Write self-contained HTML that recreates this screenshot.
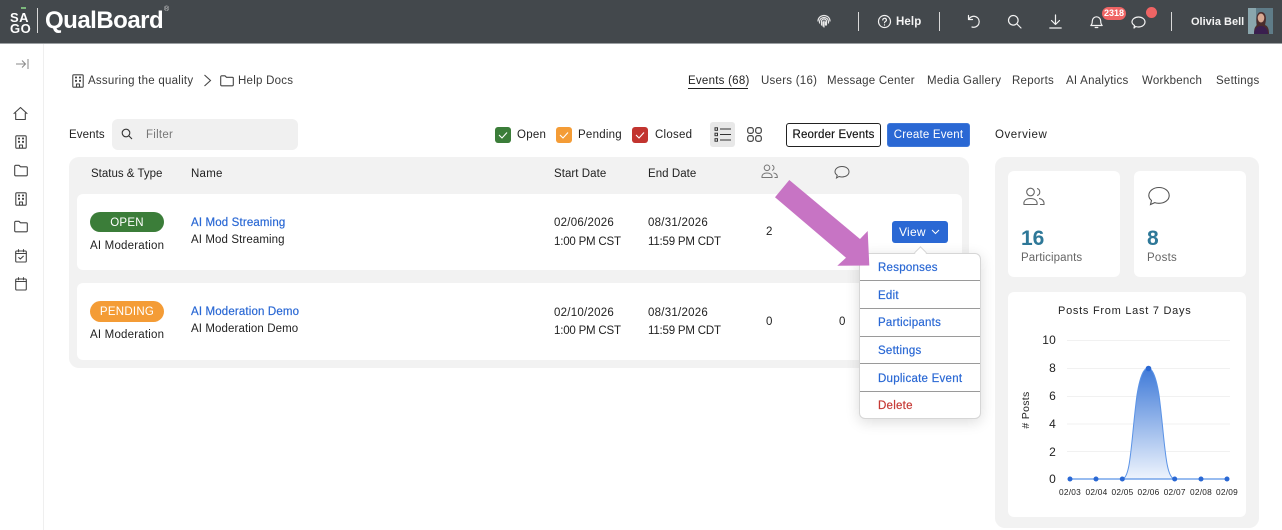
<!DOCTYPE html>
<html><head><meta charset="utf-8"><style>
html,body{margin:0;padding:0;background:#fff}
#p{position:relative;width:1282px;height:530px;overflow:hidden;background:#fff;font-family:"Liberation Sans",sans-serif;font-size:11.5px;color:#222;letter-spacing:.25px}
#p>span,.t{position:absolute;white-space:nowrap;line-height:14px}
#p>span{margin-top:1px}
.b{position:absolute}
.l{color:#2a68d4;font-weight:400;-webkit-text-stroke:.2px #2a68d4;letter-spacing:.15px}
.r2{letter-spacing:.1px}
.tm{letter-spacing:-.2px}
svg{position:absolute;overflow:visible}
.i{fill:none;stroke:#444;stroke-width:1.1;stroke-linecap:round;stroke-linejoin:round}
.w{fill:none;stroke:#f2f2f2;stroke-width:1.2;stroke-linecap:round;stroke-linejoin:round}
.n{color:#3a3a3a}
.m{color:#2a68d4;-webkit-text-stroke:.2px #2a68d4;left:878px}
.h{position:absolute;left:860px;width:120px;height:1px;background:#9a9a9a}
</style></head><body><div id="p">
<div class="b" style="left:0;top:0;width:1282px;height:43px;background:#43484c;border-bottom:1px solid #9b9fa2;box-sizing:content-box"></div>
<div class="b" style="left:43px;top:44px;width:1px;height:486px;background:#efefef"></div>

<div class="t" style="left:10px;top:12px;color:#fff;font-weight:700;font-size:13px;line-height:11px;letter-spacing:.5px">SA<br>GO</div>
<div class="b" style="left:21px;top:7px;width:5px;height:2px;background:#7cb87c"></div>
<div class="b" style="left:37px;top:8px;width:1px;height:25px;background:#d8d8d8"></div>
<div class="t" style="left:45px;top:8px;color:#fff;font-weight:700;font-size:24px;line-height:26px;letter-spacing:-.5px">QualBoard</div>
<div class="t" style="left:164px;top:6px;color:#ddd;font-size:7px;line-height:8px;letter-spacing:0">®</div>

<!-- top right -->
<svg style="left:816px;top:13px" width="16" height="16" viewBox="0 0 16 16"><g class="w" stroke-width="1"><path d="M2 8a6 5.500 0 0 1 12 0M3.500 10V8.500a4.500 4 0 0 1 9 0V10M5.500 12V8.500a2.500 2.500 0 0 1 5 0V12M8 8v6M7 13v-4M9.500 12V9" stroke="#e8e8e8"/></g></svg>
<div class="b" style="left:858px;top:12px;width:1px;height:19px;background:#d9d9d9"></div>
<svg style="left:877px;top:14px" width="15" height="15" viewBox="0 0 15 15"><circle class="w" cx="7.500" cy="7.500" r="6"/><path class="w" d="M5.800 6a1.800 1.700 0 1 1 2.600 1.500c-.6.400-.9.700-.9 1.300M7.500 10.800v.2"/></svg>
<div class="t" style="left:896px;top:15px;color:#f4f4f4;font-weight:700;font-size:11.500px;letter-spacing:.1px">Help</div>
<div class="b" style="left:939px;top:12px;width:1px;height:19px;background:#d9d9d9"></div>
<svg style="left:966px;top:14px" width="15" height="15" viewBox="0 0 15 15"><path class="w" d="M2.500 1.500v4h4M2.700 5.500A5.500 5.500 0 1 1 6 13"/></svg>
<svg style="left:1007px;top:14px" width="15" height="15" viewBox="0 0 15 15"><circle class="w" cx="6.300" cy="6.300" r="4.800"/><path class="w" d="M10 10l4 4"/></svg>
<svg style="left:1048px;top:14px" width="15" height="15" viewBox="0 0 15 15"><path class="w" d="M7.500 1v9M3.500 6.500l4 4 4-4M1.800 14h11.400"/></svg>
<svg style="left:1089px;top:14px" width="15" height="15" viewBox="0 0 15 15"><path class="w" d="M1.800 11.500c1-1 1.500-2 1.500-4.500a4.200 4.200 0 0 1 8.400 0c0 2.500.5 3.500 1.500 4.500zM6.200 13.500h2.600"/></svg>
<div class="t" style="left:1102px;top:7px;width:24px;height:13px;border-radius:7px;background:#ef6464;color:#fff;font-size:9px;font-weight:700;line-height:13px;text-align:center;letter-spacing:0">2318</div>
<svg style="left:1131px;top:15px" width="15" height="14" viewBox="0 0 15 14"><path class="w" d="M3 13l.5-2.500C2 9.500 1 8.300 1 7c0-2.800 2.900-5 6.500-5S14 4.200 14 7s-2.900 5-6.500 5c-1 0-2-.2-2.800-.5z"/></svg>
<div class="b" style="left:1146px;top:7px;width:11px;height:11px;border-radius:50%;background:#ef6464"></div>
<div class="b" style="left:1171px;top:12px;width:1px;height:19px;background:#d9d9d9"></div>
<div class="t" style="left:1191px;top:15px;color:#f4f4f4;font-weight:700;font-size:11px;letter-spacing:0">Olivia Bell</div>
<svg style="left:1248px;top:8px" width="25" height="26" viewBox="0 0 25 26"><rect width="25" height="26" fill="#5f7c88"/><rect x="0" y="0" width="8" height="26" fill="#8aa6ad"/><path d="M6 26c0-6 1-7 3-9-1-5-1-13 4-13s6 6 4 13c3 1 4 4 4 9z" fill="#4a2c2c"/><ellipse cx="13" cy="10" rx="3.300" ry="4.500" fill="#d8a892"/><path d="M6 26c0-5 3-8 7-8s7 3 7 8z" fill="#3a1f4f"/></svg>

<!-- sidebar -->
<svg style="left:14px;top:57px" width="16" height="14" viewBox="0 0 16 14"><path d="M2 7h9M8 3.500L11.500 7 8 10.500M14 2v10" fill="none" stroke="#8a8a8a" stroke-width="1"/></svg>
<svg style="left:13px;top:106px" width="15" height="15" viewBox="0 0 15 15"><path class="i" d="M1 7.500L7.500 1.500 14 7.500M2.700 7v6.500h9.600V7"/></svg>
<svg style="left:15px;top:135px" width="12" height="14" viewBox="0 0 12 14"><rect class="i" x=".8" y=".8" width="10.400" height="12.400" rx="1"/><path stroke="#444" stroke-width="1.800" d="M3 3.500h2M7 3.500h2M3 6.800h2M7 6.800h2"/><path class="i" d="M4.500 13V10h3v3"/></svg>
<svg style="left:14px;top:164px" width="14" height="13" viewBox="0 0 14 13"><path class="i" d="M.7 2.300A1 1 0 0 1 1.700 1.300h3.300l1.500 1.500h5.800a1 1 0 0 1 1 1v7a1 1 0 0 1-1 1H1.700a1 1 0 0 1-1-1z"/></svg>
<svg style="left:15px;top:192px" width="12" height="14" viewBox="0 0 12 14"><rect class="i" x=".8" y=".8" width="10.400" height="12.400" rx="1"/><path stroke="#444" stroke-width="1.800" d="M3 3.500h2M7 3.500h2M3 6.800h2M7 6.800h2"/><path class="i" d="M4.500 13V10h3v3"/></svg>
<svg style="left:14px;top:220px" width="14" height="13" viewBox="0 0 14 13"><path class="i" d="M.7 2.300A1 1 0 0 1 1.700 1.300h3.300l1.500 1.500h5.800a1 1 0 0 1 1 1v7a1 1 0 0 1-1 1H1.700a1 1 0 0 1-1-1z"/></svg>
<svg style="left:15px;top:249px" width="12" height="14" viewBox="0 0 12 14"><rect class="i" x=".7" y="2" width="10.600" height="11" rx="1"/><path class="i" d="M.7 4.500h10.600M3.500.7v2M8.500.7v2M3.800 8.500l1.500 1.500 3-2.800"/></svg>
<svg style="left:15px;top:277px" width="12" height="14" viewBox="0 0 12 14"><rect class="i" x=".7" y="2" width="10.600" height="11" rx="1"/><path class="i" d="M.7 4.500h10.600M3.500.7v2M8.500.7v2"/></svg>

<!-- breadcrumb -->
<svg style="left:72px;top:74px" width="12" height="14" viewBox="0 0 12 14"><rect class="i" x=".8" y=".8" width="10.400" height="12.400" rx="1"/><path stroke="#444" stroke-width="1.800" d="M3 3.500h2M7 3.500h2M3 6.800h2M7 6.800h2"/><path class="i" d="M4.500 13V10h3v3"/></svg>
<span class="n" style="left:88px;top:73px">Assuring the quality</span>
<svg style="left:203px;top:74px" width="9" height="13" viewBox="0 0 9 13"><path d="M1.500 1l6 5.500-6 5.500" fill="none" stroke="#444" stroke-width="1.100"/></svg>
<svg style="left:220px;top:75px" width="14" height="12" viewBox="0 0 14 12"><path class="i" d="M.7 1.800A1 1 0 0 1 1.700.8h3.300l1.500 1.500h5.800a1 1 0 0 1 1 1v6.500a1 1 0 0 1-1 1H1.700a1 1 0 0 1-1-1z"/></svg>
<span class="n" style="left:238px;top:73px">Help Docs</span>

<!-- nav -->
<span class="n" style="left:688px;top:73px;color:#222">Events (68)</span>
<div class="b" style="left:688px;top:88px;width:60px;height:1px;background:#222"></div>
<span class="n" style="left:761px;top:73px">Users (16)</span>
<span class="n" style="left:827px;top:73px">Message Center</span>
<span class="n" style="left:927px;top:73px">Media Gallery</span>
<span class="n" style="left:1012px;top:73px">Reports</span>
<span class="n" style="left:1066px;top:73px">AI Analytics</span>
<span class="n" style="left:1142px;top:73px">Workbench</span>
<span class="n" style="left:1216px;top:73px">Settings</span>

<!-- toolbar -->
<span style="left:69px;top:127px;letter-spacing:.1px">Events</span>
<div class="b" style="left:112px;top:119px;width:186px;height:31px;border-radius:6px;background:#f0f0f0"></div>
<svg style="left:121px;top:128px" width="12" height="12" viewBox="0 0 12 12"><circle cx="5" cy="5" r="3.800" fill="none" stroke="#333" stroke-width="1.100"/><path d="M8 8l3 3" stroke="#333" stroke-width="1.100"/></svg>
<span style="left:146px;top:127px;color:#777">Filter</span>

<div class="b" style="left:495px;top:127px;width:16px;height:16px;border-radius:3px;background:#3b7d39"></div>
<svg style="left:495px;top:127px" width="16" height="16" viewBox="0 0 16 16"><path d="M4 8l3 3 5-5.500" fill="none" stroke="#fff" stroke-width="1.100"/></svg>
<span style="left:517px;top:127px">Open</span>
<div class="b" style="left:556px;top:127px;width:16px;height:16px;border-radius:3px;background:#f49c36"></div>
<svg style="left:556px;top:127px" width="16" height="16" viewBox="0 0 16 16"><path d="M4 8l3 3 5-5.500" fill="none" stroke="#fff" stroke-width="1.100"/></svg>
<span style="left:578px;top:127px">Pending</span>
<div class="b" style="left:632px;top:127px;width:16px;height:16px;border-radius:3px;background:#c2342f"></div>
<svg style="left:632px;top:127px" width="16" height="16" viewBox="0 0 16 16"><path d="M4 8l3 3 5-5.500" fill="none" stroke="#fff" stroke-width="1.100"/></svg>
<span style="left:655px;top:127px">Closed</span>

<div class="b" style="left:710px;top:122px;width:25px;height:25px;border-radius:3px;background:#e8e8e8"></div>
<svg style="left:714px;top:127px" width="18" height="15" viewBox="0 0 18 15"><path d="M6 2h11M6 7.500h11M6 13h11" stroke="#333" stroke-width="1.100"/><rect x="1" y=".8" width="2.500" height="2.500" fill="none" stroke="#333"/><rect x="1" y="6.200" width="2.500" height="2.500" fill="none" stroke="#333"/><rect x="1" y="11.700" width="2.500" height="2.500" fill="none" stroke="#333"/></svg>
<svg style="left:747px;top:127px" width="15" height="15" viewBox="0 0 15 15"><g fill="none" stroke="#333" stroke-width="1.100"><rect x=".7" y=".7" width="5.600" height="5.600" rx="2"/><rect x="8.700" y=".7" width="5.600" height="5.600" rx="2"/><rect x=".7" y="8.700" width="5.600" height="5.600" rx="2"/><rect x="8.700" y="8.700" width="5.600" height="5.600" rx="2"/></g></svg>

<div class="b" style="left:786px;top:123px;width:93px;height:22px;border:1px solid #222;border-radius:3px;background:#fff;text-align:center;line-height:22px;letter-spacing:.15px;color:#111;-webkit-text-stroke:.15px #111">Reorder Events</div>
<div class="b" style="left:887px;top:123px;height:22px;border:1px solid #3f78d8;box-sizing:content-box;border-radius:3px;background:#2a68d4;text-align:center;line-height:22px;color:#fff;letter-spacing:.2px;width:81px">Create Event</div>
<span style="left:995px;top:127px;letter-spacing:.55px">Overview</span>

<!-- table -->
<div class="b" style="left:69px;top:157px;width:900px;height:211px;border-radius:10px;background:#f2f2f2"></div>
<span style="left:91px;top:166px;letter-spacing:0">Status &amp; Type</span>
<span style="left:191px;top:166px">Name</span>
<span style="left:554px;top:166px;letter-spacing:.05px">Start Date</span>
<span style="left:648px;top:166px;letter-spacing:.05px">End Date</span>
<svg style="left:761px;top:164px" width="17" height="15" viewBox="0 0 17 15"><g fill="none" stroke="#777" stroke-width="1"><circle cx="6" cy="3.800" r="2.800"/><path d="M11 1.200a2.700 2.700 0 0 1 0 5.200M1 13.500c-.5-3 2-4.500 5-4.500s5.500 1.500 5 4.500zM12.500 9c2.500.3 4 1.800 3.800 4.500H13.500"/></g></svg>
<svg style="left:834px;top:165px" width="16" height="14" viewBox="0 0 16 14"><path d="M2.500 13l.7-2.700C1.800 9.300 1 8 1 6.800 1 3.800 4 1.500 8 1.500s7 2.300 7 5.300-3 5.200-7 5.200c-1 0-2-.2-3-.5z" fill="none" stroke="#555" stroke-width="1"/></svg>

<div class="b" style="left:77px;top:194px;width:885px;height:76px;border-radius:6px;background:#fff"></div>
<div class="b" style="left:77px;top:283px;width:885px;height:77px;border-radius:6px;background:#fff"></div>

<div class="b" style="left:90px;top:212px;width:74px;height:20px;border-radius:10px;background:#3b7d39;color:#fff;text-align:center;line-height:22px;font-size:11.500px">OPEN</div>
<span style="left:90px;top:238px;letter-spacing:.2px">AI Moderation</span>
<span class="l" style="left:191px;top:215px">AI Mod Streaming</span>
<span class="r2" style="left:191px;top:232px">AI Mod Streaming</span>
<span style="left:554px;top:215px">02/06/2026</span>
<span class="tm" style="left:554px;top:234px">1:00 PM CST</span>
<span style="left:648px;top:215px">08/31/2026</span>
<span class="tm" style="left:648px;top:234px">11:59 PM CDT</span>
<span style="left:766px;top:224px">2</span>

<div class="b" style="left:90px;top:301px;width:74px;height:21px;border-radius:11px;background:#f49c36;color:#fff;text-align:center;line-height:23px;font-size:11.500px">PENDING</div>
<span style="left:90px;top:327px;letter-spacing:.2px">AI Moderation</span>
<span class="l" style="left:191px;top:304px">AI Moderation Demo</span>
<span class="r2" style="left:191px;top:321px">AI Moderation Demo</span>
<span style="left:554px;top:305px">02/10/2026</span>
<span class="tm" style="left:554px;top:323px">1:00 PM CST</span>
<span style="left:648px;top:305px">08/31/2026</span>
<span class="tm" style="left:648px;top:323px">11:59 PM CDT</span>
<span style="left:766px;top:314px">0</span>
<span style="left:839px;top:314px">0</span>

<!-- view -->
<div class="b" style="left:892px;top:221px;width:56px;height:22px;border-radius:3px;background:#2a68d4"></div>
<span style="left:899px;top:224px;color:#fff;font-size:12px">View</span>
<svg style="left:931px;top:229px" width="9" height="6" viewBox="0 0 9 6"><path d="M1 1l3.500 3.500L8 1" fill="none" stroke="#fff"/></svg>

<!-- menu -->
<div class="b" style="left:859px;top:253px;width:122px;height:166px;box-sizing:border-box;border:1px solid #d6d6d6;border-radius:6px;background:#fff;box-shadow:0 3px 14px rgba(0,0,0,.14)"></div>
<div class="b" style="left:916px;top:248px;width:8px;height:8px;background:#fff;border-left:1px solid #d6d6d6;border-top:1px solid #d6d6d6;transform:rotate(45deg)"></div>
<svg style="left:0;top:0" width="1282" height="530"><polygon points="789.300,180 860,239 867.700,231 869.300,265.500 837.300,265.700 846,257.700 775,197.300" fill="#c774c4"/></svg>
<span class="m" style="top:260px">Responses</span><div class="h" style="top:280px"></div>
<span class="m" style="top:288px">Edit</span><div class="h" style="top:308px"></div>
<span class="m" style="top:315px">Participants</span><div class="h" style="top:336px"></div>
<span class="m" style="top:343px">Settings</span><div class="h" style="top:363px"></div>
<span class="m" style="top:371px">Duplicate Event</span><div class="h" style="top:391px"></div>
<span class="m" style="top:398px;color:#c63a36;-webkit-text-stroke:.2px #c63a36">Delete</span>

<!-- overview -->
<div class="b" style="left:995px;top:157px;width:264px;height:371px;border-radius:10px;background:#f2f2f2"></div>
<div class="b" style="left:1008px;top:171px;width:112px;height:106px;border-radius:6px;background:#fff"></div>
<div class="b" style="left:1134px;top:171px;width:112px;height:106px;border-radius:6px;background:#fff"></div>
<div class="b" style="left:1008px;top:292px;width:238px;height:225px;border-radius:6px;background:#fff"></div>
<svg style="left:1023px;top:187px" width="22" height="19" viewBox="0 0 22 19"><g fill="none" stroke="#666" stroke-width="1.100"><circle cx="7.500" cy="5" r="3.800"/><path d="M14 1.500a3.600 3.600 0 0 1 0 7M1 17.500c-.8-4 2.500-6 6.500-6s7.300 2 6.500 6zM16 11.500c3.500.5 5.300 2.500 5 6h-4"/></g></svg>
<svg style="left:1148px;top:186px" width="23" height="20" viewBox="0 0 23 20"><path d="M2.500 18.500l1-4C1.800 13 .8 11.300.8 9.500c0-4.500 4.500-8 10.200-8s10.200 3.500 10.200 8-4.500 7.800-10.200 7.800c-1.500 0-3-.2-4.200-.7z" fill="none" stroke="#555" stroke-width="1.100"/></svg>
<span style="left:1021px;top:227px;color:#2e7898;font-size:21px;line-height:22px;font-weight:700;letter-spacing:0">16</span>
<span style="left:1021px;top:250px;color:#666;letter-spacing:.1px">Participants</span>
<span style="left:1147px;top:227px;color:#2e7898;font-size:21px;line-height:22px;font-weight:700;letter-spacing:0">8</span>
<span style="left:1147px;top:250px;color:#666">Posts</span>
<span style="left:1058px;top:303px;letter-spacing:.73px;font-size:11px">Posts From Last 7 Days</span>

<svg style="left:0;top:0" width="1282" height="530" viewBox="0 0 1282 530">
<defs><linearGradient id="g" x1="0" y1="0" x2="0" y2="1"><stop offset="0" stop-color="#3f7ad8"/><stop offset="1" stop-color="#eef4fd"/></linearGradient></defs>
<g stroke="#f1f1f1" stroke-width="1"><path d="M1067 340.500h163M1067 368.500h163M1067 396.500h163M1067 424h163M1067 451.500h163"/></g>
<path d="M1122 479C1131 479 1131 440 1137 395C1140 376 1144 368 1148 368C1152 368 1156 376 1159 395C1165 440 1165 479 1175 479Z" fill="url(#g)" stroke="#5b93e6" stroke-width="1"/>
<path d="M1070 479H1227" stroke="#5b93e6" stroke-width="1.200"/>
<g fill="#2a68d4"><circle cx="1070" cy="479" r="2.500"/><circle cx="1096" cy="479" r="2.500"/><circle cx="1122.300" cy="479" r="2.500"/><circle cx="1148.500" cy="368.500" r="2.800"/><circle cx="1174.700" cy="479" r="2.500"/><circle cx="1201" cy="479" r="2.500"/><circle cx="1227" cy="479" r="2.500"/></g>
<g font-family="Liberation Sans, sans-serif" font-size="12" fill="#222" text-anchor="end" style="letter-spacing:.2px"><text x="1056" y="344">10</text><text x="1056" y="372">8</text><text x="1056" y="400">6</text><text x="1056" y="428">4</text><text x="1056" y="456">2</text><text x="1056" y="483">0</text></g>
<g font-family="Liberation Sans, sans-serif" font-size="8.300" fill="#222" text-anchor="middle"><text x="1070" y="495">02/03</text><text x="1096.500" y="495">02/04</text><text x="1122.500" y="495">02/05</text><text x="1148.500" y="495">02/06</text><text x="1174.700" y="495">02/07</text><text x="1201" y="495">02/08</text><text x="1227" y="495">02/09</text></g>
<text transform="translate(1029,410) rotate(-90)" font-family="Liberation Sans, sans-serif" font-size="10.500" fill="#222" text-anchor="middle" style="letter-spacing:.3px"># Posts</text>
</svg>
</div></body></html>
